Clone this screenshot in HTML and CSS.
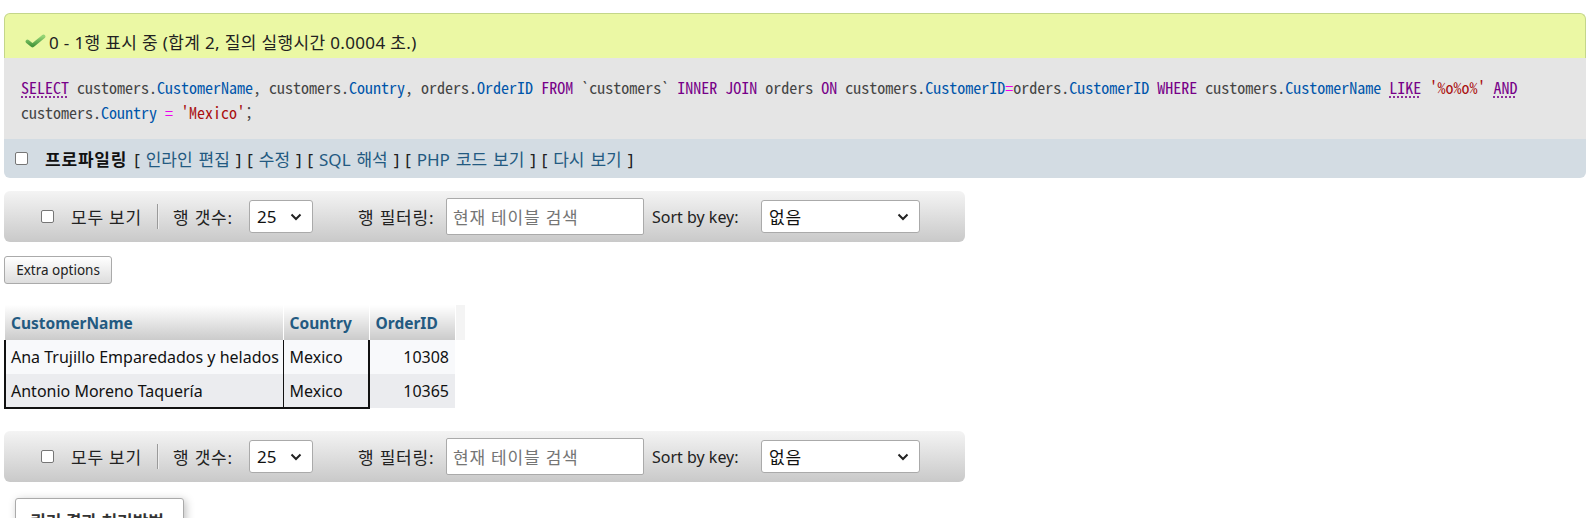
FILE: index.html
```html
<!DOCTYPE html>
<html lang="ko">
<head>
<meta charset="utf-8">
<title>phpMyAdmin result</title>
<link rel="stylesheet" href="styles.css">
</head>
<body>
<div class="page">
  <div class="result">
    <div class="success">
      <svg class="ok" width="21" height="14" viewBox="0 0 21 14" aria-hidden="true">
        <defs>
          <linearGradient id="g" x1="0" y1="0" x2="0" y2="1">
            <stop offset="0" stop-color="#93d474"/>
            <stop offset="1" stop-color="#47983d"/>
          </linearGradient>
        </defs>
        <polyline points="2.5,7.5 7.5,11.5 18.5,2.5" fill="none" stroke="url(#g)" stroke-width="3.8" stroke-linecap="round" stroke-linejoin="round"/>
      </svg>
      <span>0 - 1행 표시 중 (합계 2, 질의 실행시간 0.0004 초.)</span>
    </div>
    <div class="sql"><code><span class="kw u">SELECT</span> customers.<span class="v2">CustomerName</span>, customers.<span class="v2">Country</span>, orders.<span class="v2">OrderID</span> <span class="kw">FROM</span> `customers` <span class="kw">INNER JOIN</span> orders <span class="kw">ON</span> customers.<span class="v2">CustomerID</span><span class="op">=</span>orders.<span class="v2">CustomerID</span> <span class="kw">WHERE</span> customers.<span class="v2">CustomerName</span> <span class="kw u">LIKE</span> <span class="str">'%o%o%'</span> <span class="kw u">AND</span> customers.<span class="v2">Country</span> <span class="op">=</span> <span class="str">'Mexico'</span>;</code></div>
    <div class="tools">
      <input type="checkbox" class="cb">
      <span class="prof">프로파일링</span>
      <span class="links">[ <a href="#">인라인 편집</a> ] [ <a href="#">수정</a> ] [ <a href="#">SQL 해석</a> ] [ <a href="#">PHP 코드 보기</a> ] [ <a href="#">다시 보기</a> ]</span>
    </div>
  </div>

  <div class="nav">
    <input type="checkbox" class="cb navcb">
    <span class="lbl showall">모두 보기</span>
    <span class="sep"></span>
    <span class="lbl rows">행 갯수:</span>
    <span class="sel sel-num"><span>25</span><svg width="12" height="8" viewBox="0 0 12 8"><polyline points="1.5,1.5 6,6 10.5,1.5" fill="none" stroke="#222" stroke-width="2"/></svg></span>
    <span class="lbl filter">행 필터링:</span>
    <span class="inp">현재 테이블 검색</span>
    <span class="lbl sortkey">Sort by key:</span>
    <span class="sel sel-key"><span>없음</span><svg width="12" height="8" viewBox="0 0 12 8"><polyline points="1.5,1.5 6,6 10.5,1.5" fill="none" stroke="#222" stroke-width="2"/></svg></span>
  </div>

  <button class="extra" type="button">Extra options</button>

  <table class="data">
    <colgroup>
      <col class="w1"><col class="w2"><col class="w3"><col class="w4">
    </colgroup>
    <thead>
      <tr>
        <th>CustomerName</th>
        <th>Country</th>
        <th>OrderID</th>
        <th class="blank"></th>
      </tr>
    </thead>
    <tbody>
      <tr class="odd">
        <td class="c1">Ana Trujillo Emparedados y helados</td>
        <td class="c2">Mexico</td>
        <td class="num">10308</td>
        <td class="empty"></td>
      </tr>
      <tr class="even last">
        <td class="c1">Antonio Moreno Taquería</td>
        <td class="c2">Mexico</td>
        <td class="num">10365</td>
        <td class="empty"></td>
      </tr>
    </tbody>
  </table>

  <div class="nav">
    <input type="checkbox" class="cb navcb">
    <span class="lbl showall">모두 보기</span>
    <span class="sep"></span>
    <span class="lbl rows">행 갯수:</span>
    <span class="sel sel-num"><span>25</span><svg width="12" height="8" viewBox="0 0 12 8"><polyline points="1.5,1.5 6,6 10.5,1.5" fill="none" stroke="#222" stroke-width="2"/></svg></span>
    <span class="lbl filter">행 필터링:</span>
    <span class="inp">현재 테이블 검색</span>
    <span class="lbl sortkey">Sort by key:</span>
    <span class="sel sel-key"><span>없음</span><svg width="12" height="8" viewBox="0 0 12 8"><polyline points="1.5,1.5 6,6 10.5,1.5" fill="none" stroke="#222" stroke-width="2"/></svg></span>
  </div>

  <div class="legend">쿼리 결과 처리방법</div>
</div>
</body>
</html>
```
FILE: styles.css
```css
html, body {
  margin: 0;
  padding: 0;
  background: #fff;
}
body {
  font-family: "Noto Sans", "Noto Sans CJK KR", sans-serif;
  font-size: 16px;
  color: #222;
  overflow: hidden;
}
.page {
  padding: 13px 6px 0 4px;
}

/* result block */
.success {
  display: flex;
  align-items: center;
  height: 24px;
  padding: 15px 0 5px 20px;
  background: #ebf8a4;
  border: 1px solid #c4d68a;
  border-bottom: 0;
  border-radius: 6px 6px 0 0;
  color: #222;
  font-size: 17px;
  letter-spacing: 0.35px;
}
.success .ok {
  margin-right: 3px;
}
.sql {
  background: #e5e5e5;
  padding: 17px 16px 14px 17px;
  line-height: 24px;
}
.sql code {
  font-family: "Noto Sans Mono CJK KR", "Liberation Mono", monospace;
  font-size: 16px;
  color: #444;
}
.kw { color: #770088; }
.u { text-decoration: underline dotted; text-underline-offset: 3px; }
.v2 { color: #0055aa; }
.op { color: #ee00ee; }
.str { color: #aa1111; }

.tools {
  display: flex;
  align-items: center;
  height: 39px;
  background: #d3dce3;
  border-radius: 0 0 6px 6px;
  padding-left: 11px;
  font-size: 17px;
}
.tools .cb {
  margin: 0 17px 0 0;
}
.cb {
  width: 13px;
  height: 13px;
  appearance: none;
  -webkit-appearance: none;
  border: 1px solid #767676;
  border-radius: 2px;
  background: #fff;
  box-sizing: border-box;
  flex: none;
}
.prof {
  color: #111;
  font-weight: 600;
  letter-spacing: 0.8px;
  margin-right: 7px;
}
.links {
  color: #222;
  word-spacing: 1.5px;
}
.links a {
  color: #235a81;
  text-decoration: none;
}

/* navigation toolbar */
.nav {
  display: flex;
  align-items: center;
  width: 961px;
  height: 51px;
  margin-top: 13px;
  border-radius: 6px;
  background: linear-gradient(#f4f4f4, #c9c9c9);
  box-sizing: border-box;
  font-size: 17px;
  letter-spacing: 0.8px;
}
.nav .navcb {
  margin: 0 0 0 37px;
}
.lbl {
  flex: none;
  color: #222;
  white-space: nowrap;
}
.showall {
  margin-left: 17px;
  width: 86px;
}
.sep {
  width: 1px;
  height: 25px;
  background: #9a9a9a;
  border-right: 1px solid #eee;
  flex: none;
}
.rows {
  margin-left: 14px;
  width: 76px;
}
.sel {
  display: flex;
  align-items: center;
  justify-content: space-between;
  height: 33px;
  box-sizing: border-box;
  border: 1px solid #aaa;
  border-radius: 3px;
  background: #fff;
  padding: 0 10px 0 7px;
  flex: none;
  color: #111;
}
.sel-num { width: 64px; letter-spacing: 0; }
.sel-key { width: 159px; }
.filter {
  margin-left: 45px;
  width: 88px;
}
.inp {
  width: 198px;
  height: 37px;
  box-sizing: border-box;
  border: 1px solid #aaa;
  border-radius: 2px;
  background: #fff;
  color: #757575;
  padding: 0 6px;
  display: flex;
  align-items: center;
  flex: none;
}
.sortkey {
  margin-left: 8px;
  width: 109px;
  font-size: 16px;
  letter-spacing: 0;
}

/* extra options */
.extra {
  display: block;
  margin-top: 14px;
  height: 28px;
  width: 108px;
  padding: 0;
  font-family: "Noto Sans", "Noto Sans CJK KR", sans-serif;
  font-size: 13.5px;
  color: #222;
  border: 1px solid #aaa;
  border-radius: 3px;
  background: linear-gradient(#fff, #ddd);
}

/* data table */
.data {
  margin-top: 21px;
  border-collapse: collapse;
  table-layout: fixed;
  width: 460px;
}
.w1 { width: 278px; }
.w2 { width: 86px; }
.w3 { width: 86px; }
.w4 { width: 10px; }
.data th {
  height: 35px;
  padding: 0 6px;
  text-align: left;
  color: #235a81;
  font-weight: 700;
  font-size: 15.5px;
  background: linear-gradient(#fff, #cbcbcb);
  border-right: 1px solid #fff;
  box-sizing: border-box;
}
.data th.blank {
  background: #f4f4f4;
  border-right: 0;
  padding: 0;
}
.data td {
  height: 34px;
  padding: 0 6px;
  color: #111;
  white-space: nowrap;
  overflow: hidden;
  box-sizing: border-box;
}
.data tr.odd td { background: #f8f9fb; }
.data tr.even td { background: #ebecef; }
.data td.empty { background: #fff !important; padding: 0; }
.data td.c1 {
  border-left: 2px solid #111;
  border-right: 1px solid #111;
  padding-left: 5px;
  padding-right: 2px;
}
.data td.c2 {
  border-right: 2px solid #111;
}
.data tr.last td.c1,
.data tr.last td.c2 {
  border-bottom: 2px solid #111;
}
.data td.num {
  text-align: right;
}

.data + .nav {
  margin-top: 22px;
}

.legend {
  margin: 16px 0 0 11px;
  width: 169px;
  height: 40px;
  box-sizing: border-box;
  border: 1px solid #aaa;
  border-radius: 3px;
  background: #fff;
  box-shadow: 2px 2px 8px rgba(0,0,0,0.25);
  padding: 9px 0 0 14px;
  font-weight: 700;
  font-size: 17px;
  color: #333;
  white-space: nowrap;
}
```
